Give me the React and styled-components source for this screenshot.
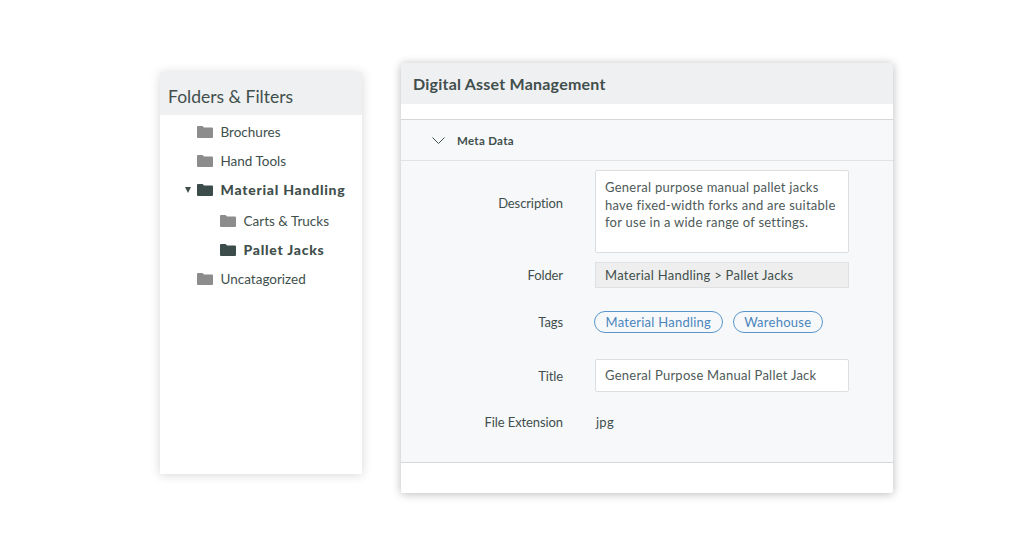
import React from "react";
import styled, { createGlobalStyle } from "styled-components";

const GlobalStyle = createGlobalStyle`
  html, body {
    margin: 0;
    padding: 0;
    background: #ffffff;
  }
  body {
    font-family: Lato, "Open Sans", sans-serif;
    color: #414f4c;
  }
`;

const Page = styled.div`
  width: 1024px;
  height: 556px;
  box-sizing: border-box;
  padding: 63px 0 0 160px;
  display: flex;
  align-items: flex-start;
  gap: 39px;
  overflow: hidden;
`;

const Sidebar = styled.aside`
  width: 202px;
  height: 402px;
  margin-top: 9px;
  background: #ffffff;
  box-shadow: 0 1px 10px rgba(0, 0, 0, 0.16);
`;

const SidebarHeader = styled.h2`
  margin: 0;
  height: 43px;
  box-sizing: border-box;
  padding: 6px 8px 0;
  display: flex;
  align-items: center;
  background: #eff0f2;
  font-size: 17.5px;
  font-weight: 400;
  letter-spacing: 0;
  color: #414f4c;
`;

const Tree = styled.ul`
  list-style: none;
  margin: 0;
  padding: 2px 0 0;
`;

const TreeRow = styled.li`
  height: 29px;
  display: flex;
  align-items: center;
  padding-left: ${(p) => (p.$nested ? 60 : 37)}px;
  margin-top: ${(p) => (p.$gap ? 2 : 0)}px;
  position: relative;
  font-size: ${(p) => (p.$active ? 14 : 13.5)}px;
  font-weight: ${(p) => (p.$active ? 900 : 400)};
  letter-spacing: ${(p) => (p.$active ? 0.75 : 0)}px;
  color: #414f4c;
`;

const Caret = styled.span`
  position: absolute;
  left: 25px;
  top: 12px;
  width: 0;
  height: 0;
  border-left: 3.5px solid transparent;
  border-right: 3.5px solid transparent;
  border-top: 6px solid #414f4c;
`;

const FolderSvg = styled.svg`
  width: 16px;
  height: 12px;
  margin-right: 7.5px;
  flex: none;
  fill: ${(p) => (p.$active ? "#3b4c4a" : "#8c8c8c")};
`;

const Folder = ({ active }) => (
  <FolderSvg $active={active} viewBox="0 0 16 12">
    <path d="M0 1a1 1 0 0 1 1-1h4.6l1.4 1.5h8a1 1 0 0 1 1 1V11a1 1 0 0 1-1 1H1a1 1 0 0 1-1-1z" />
  </FolderSvg>
);

const Panel = styled.main`
  width: 492px;
  height: 430px;
  display: flex;
  flex-direction: column;
  background: #ffffff;
  border-radius: 2px;
  box-shadow: 0 1px 10px rgba(0, 0, 0, 0.28);
`;

const PanelHeader = styled.h1`
  margin: 0;
  height: 41px;
  box-sizing: border-box;
  padding: 0 12px;
  display: flex;
  align-items: center;
  background: #eff0f2;
  font-size: 16px;
  font-weight: 700;
  letter-spacing: 0.22px;
  color: #414f4c;
`;

const Section = styled.section`
  margin-top: 15px;
  flex: none;
  height: 344px;
  box-sizing: border-box;
  background: #f7f8fa;
  border-top: 1px solid #d5d7d9;
  border-bottom: 1px solid #d5d7d9;
`;

const SectionTitle = styled.div`
  height: 41px;
  box-sizing: border-box;
  display: flex;
  align-items: center;
  padding-left: 31px;
  gap: 12px;
  border-bottom: 1px solid #e1e3e5;
  font-size: 11.5px;
  font-weight: 700;
  letter-spacing: 0.3px;
  color: #414f4c;
`;

const Chevron = styled.svg`
  width: 13px;
  height: 7px;
  fill: none;
  stroke: #414f4c;
  stroke-width: 1;
`;

const Form = styled.div`
  padding-top: 9px;
  font-size: 13px;
  letter-spacing: 0.25px;
`;

const Row = styled.div`
  display: grid;
  grid-template-columns: 162px 254px;
  column-gap: 32px;
  align-items: ${(p) => (p.$top ? "start" : "center")};
  margin-top: ${(p) => p.$mt || 0}px;
`;

const Label = styled.div`
  text-align: right;
  color: #414f4c;
  letter-spacing: -0.1px;
  line-height: 16px;
  padding-top: ${(p) => p.$pt || 0}px;
`;

const Value = styled.div`
  box-sizing: border-box;
  height: ${(p) => p.$h}px;
  display: flex;
  align-items: center;
`;

const TextBox = styled(Value)`
  align-items: ${(p) => (p.$multi ? "flex-start" : "center")};
  padding: ${(p) => (p.$multi ? "8px 9px 0" : "0 9px")};
  background: #ffffff;
  border: 1px solid #dcdee0;
  border-radius: 2px;
  line-height: 17.5px;
  color: #4e5a58;
`;

const ReadOnlyBox = styled(Value)`
  padding: 0 9px;
  background: #eeeeee;
  border: 1px solid #e0e1e2;
  color: #414f4c;
`;

const TagList = styled(Value)`
  margin-left: -1px;
  gap: 10px;
`;

const Tag = styled.span`
  height: 22px;
  box-sizing: border-box;
  display: inline-flex;
  align-items: center;
  padding: 0 10.5px;
  border: 1px solid #5a96cb;
  border-radius: 11px;
  color: #4a86bd;
  font-size: 13px;
`;

const PlainValue = styled(Value)`
  color: #414f4c;
  padding-left: 1px;
`;

const items = [
  { name: "Brochures" },
  { name: "Hand Tools" },
  { name: "Material Handling", active: true, open: true },
  { name: "Carts & Trucks", nested: true, gap: true },
  { name: "Pallet Jacks", nested: true, active: true },
  { name: "Uncatagorized" },
];

export default function App() {
  return (
    <>
      <GlobalStyle />
      <Page>
        <Sidebar>
          <SidebarHeader>Folders &amp; Filters</SidebarHeader>
          <Tree>
            {items.map((item) => (
              <TreeRow key={item.name} $nested={item.nested} $active={item.active} $gap={item.gap}>
                {item.open && <Caret />}
                <Folder active={item.active} />
                {item.name}
              </TreeRow>
            ))}
          </Tree>
        </Sidebar>
        <Panel>
          <PanelHeader>Digital Asset Management</PanelHeader>
          <Section>
            <SectionTitle>
              <Chevron viewBox="0 0 13 7">
                <path d="M.5.5l6 6 6-6" />
              </Chevron>
              Meta Data
            </SectionTitle>
            <Form>
              <Row $top>
                <Label $pt={25}>Description</Label>
                <TextBox $multi $h={83}>
                  General purpose manual pallet jacks have fixed-width forks and are suitable for use in a wide range of settings.
                </TextBox>
              </Row>
              <Row $mt={9}>
                <Label>Folder</Label>
                <ReadOnlyBox $h={26}>Material Handling &gt; Pallet Jacks</ReadOnlyBox>
              </Row>
              <Row $mt={23}>
                <Label>Tags</Label>
                <TagList $h={22}>
                  <Tag>Material Handling</Tag>
                  <Tag>Warehouse</Tag>
                </TagList>
              </Row>
              <Row $mt={26}>
                <Label>Title</Label>
                <TextBox $h={33}>General Purpose Manual Pallet Jack</TextBox>
              </Row>
              <Row $mt={22}>
                <Label>File Extension</Label>
                <PlainValue $h={16}>jpg</PlainValue>
              </Row>
            </Form>
          </Section>
        </Panel>
      </Page>
    </>
  );
}
